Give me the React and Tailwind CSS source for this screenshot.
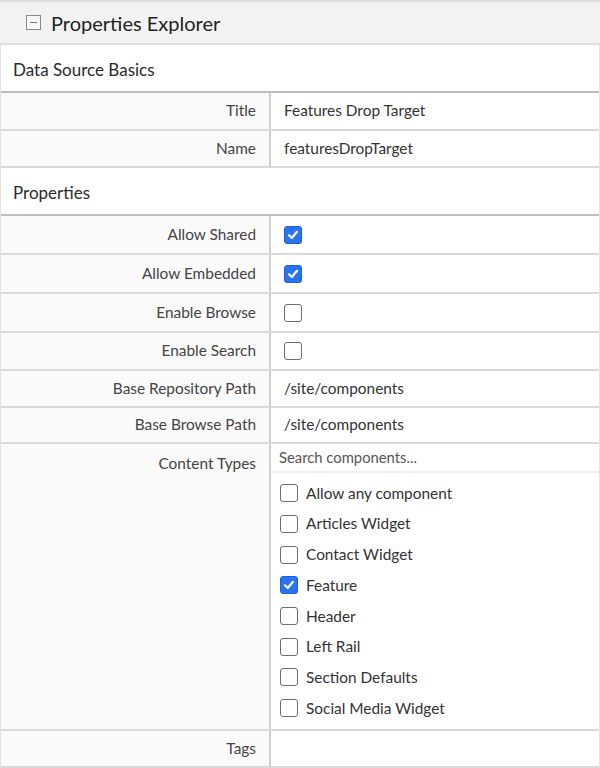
import React from "react"

const FONT = { fontFamily: "Lato, 'Noto Sans', sans-serif" }

const Check = ({ checked }) =>
  checked ? (
    <span className="w-[18px] h-[18px] rounded-[3px] bg-[#2a73f0] border border-[#1d5fd6] flex items-center justify-center shrink-0">
      <svg width="12" height="12" viewBox="0 0 12 12">
        <path d="M2 6.3 L4.8 9 L10 2.8" fill="none" stroke="white" strokeWidth="2.2" strokeLinecap="round" strokeLinejoin="round" />
      </svg>
    </span>
  ) : (
    <span className="w-[18px] h-[18px] rounded-[3px] bg-white border-[1.5px] border-[#6b6b6b] shrink-0" />
  )

const Row = ({ label, children, h = "h-[38px]" }) => (
  <div className={`grid grid-cols-[270px_1fr] border-b-2 border-[#d9d9d9] ${h}`}>
    <div className="bg-[#fafafa] border-r-2 border-[#cfcfcf] text-right pr-[13px] text-[#444] flex justify-end items-center">
      {label}
    </div>
    <div className="flex items-center pl-[13px] text-[#333] bg-white">{children}</div>
  </div>
)

const contentTypes = [
  ["Allow any component", false],
  ["Articles Widget", false],
  ["Contact Widget", false],
  ["Feature", true],
  ["Header", false],
  ["Left Rail", false],
  ["Section Defaults", false],
  ["Social Media Widget", false]
]

export default function App() {
  return (
    <div style={FONT} className="w-[600px] h-[768px] bg-white text-[15.4px] overflow-hidden">
      {/* Header */}
      <div className="h-[45px] bg-[#f2f2f2] border-t-2 border-b-2 border-[#dedede] flex items-center pl-[26px]">
        <span className="w-[15px] h-[15px] border-[1.5px] border-[#8a8a8a] bg-[#f7f7f7] flex items-center justify-center">
          <span className="w-[7px] h-[1.5px] bg-[#777]" />
        </span>
        <span className="ml-[10px] text-[20px] text-[#222]">Properties Explorer</span>
      </div>

      <div className="border-l border-r border-[#e2e2e2]">
        <div className="h-[46px] flex items-center pl-3 pt-[3px] text-[17px] text-[#2a2a2a]">Data Source Basics</div>

        <div className="border-t-2 border-[#bdbdbd]">
          <Row label="Title" h="h-[38px]">Features Drop Target</Row>
          <Row label="Name" h="h-[37px]">featuresDropTarget</Row>
        </div>

        <div className="h-[46px] flex items-center pl-3 pt-[3px] text-[17px] text-[#2a2a2a]">Properties</div>

        <div className="border-t-2 border-[#bdbdbd]">
          <Row label="Allow Shared" h="h-[39px]">
            <Check checked />
          </Row>
          <Row label="Allow Embedded" h="h-[39px]">
            <Check checked />
          </Row>
          <Row label="Enable Browse" h="h-[39px]">
            <Check />
          </Row>
          <Row label="Enable Search" h="h-[38px]">
            <Check />
          </Row>
          <Row label="Base Repository Path" h="h-[37px]">/site/components</Row>
          <Row label="Base Browse Path" h="h-[36px]">/site/components</Row>

          <div className="grid grid-cols-[270px_1fr] border-b-2 border-[#d9d9d9] h-[287px]">
            <div className="bg-[#fafafa] border-r-2 border-[#cfcfcf] text-right pr-[13px] text-[#444] pt-[8px]">
              Content Types
            </div>
            <div className="flex flex-col">
              <div className="h-[29px] border-b-2 border-[#efefef] flex items-center pl-[8px] text-[#555] text-[14.8px]">
                Search components...
              </div>
              <div className="flex flex-col pl-[9px] pt-[5px]">
                {contentTypes.map(([name, checked]) => (
                  <div key={name} className="h-[30.7px] flex items-center gap-[8px] text-[#333]">
                    <Check checked={checked} />
                    <span>{name}</span>
                  </div>
                ))}
              </div>
            </div>
          </div>

          <Row label="Tags" h="h-[37px]" />
        </div>
      </div>
    </div>
  )
}
